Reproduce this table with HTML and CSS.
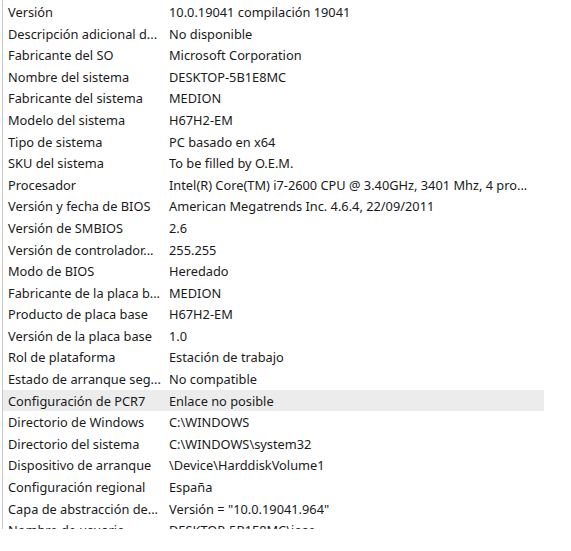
FILE: index.html
```html
<!DOCTYPE html>
<html lang="es">
<head>
<meta charset="utf-8">
<link rel="stylesheet" href="styles.css">
</head>
<body>
<div class="panel">
  <div class="list">
    <div class="row"><span class="k">Versión</span><span class="v">10.0.19041 compilación 19041</span></div>
    <div class="row"><span class="k">Descripción adicional d...</span><span class="v">No disponible</span></div>
    <div class="row"><span class="k">Fabricante del SO</span><span class="v">Microsoft Corporation</span></div>
    <div class="row"><span class="k">Nombre del sistema</span><span class="v">DESKTOP-5B1E8MC</span></div>
    <div class="row"><span class="k">Fabricante del sistema</span><span class="v">MEDION</span></div>
    <div class="row"><span class="k">Modelo del sistema</span><span class="v">H67H2-EM</span></div>
    <div class="row"><span class="k">Tipo de sistema</span><span class="v">PC basado en x64</span></div>
    <div class="row"><span class="k">SKU del sistema</span><span class="v">To be filled by O.E.M.</span></div>
    <div class="row"><span class="k">Procesador</span><span class="v">Intel(R) Core(TM) i7-2600 CPU @ 3.40GHz, 3401 Mhz, 4 pro...</span></div>
    <div class="row"><span class="k">Versión y fecha de BIOS</span><span class="v">American Megatrends Inc. 4.6.4, 22/09/2011</span></div>
    <div class="row"><span class="k">Versión de SMBIOS</span><span class="v">2.6</span></div>
    <div class="row"><span class="k">Versión de controlador...</span><span class="v">255.255</span></div>
    <div class="row"><span class="k">Modo de BIOS</span><span class="v">Heredado</span></div>
    <div class="row"><span class="k">Fabricante de la placa b...</span><span class="v">MEDION</span></div>
    <div class="row"><span class="k">Producto de placa base</span><span class="v">H67H2-EM</span></div>
    <div class="row"><span class="k">Versión de la placa base</span><span class="v">1.0</span></div>
    <div class="row"><span class="k">Rol de plataforma</span><span class="v">Estación de trabajo</span></div>
    <div class="row"><span class="k">Estado de arranque seg...</span><span class="v">No compatible</span></div>
    <div class="row sel"><span class="k">Configuración de PCR7</span><span class="v">Enlace no posible</span></div>
    <div class="row"><span class="k">Directorio de Windows</span><span class="v">C:\WINDOWS</span></div>
    <div class="row"><span class="k">Directorio del sistema</span><span class="v">C:\WINDOWS\system32</span></div>
    <div class="row"><span class="k">Dispositivo de arranque</span><span class="v">\Device\HarddiskVolume1</span></div>
    <div class="row"><span class="k">Configuración regional</span><span class="v">España</span></div>
    <div class="row"><span class="k">Capa de abstracción de...</span><span class="v">Versión = "10.0.19041.964"</span></div>
    <div class="row"><span class="k">Nombre de usuario</span><span class="v">DESKTOP-5B1E8MC\jose</span></div>
  </div>
</div>
</body>
</html>
```

FILE: styles.css
```css
html, body {
  margin: 0;
  padding: 0;
  background: #ffffff;
}
body {
  font-family: "Noto Sans", "Open Sans", sans-serif;
  font-size: 12.8px;
  color: #1a1a1a;
}
.panel {
  margin-left: 2px;
  width: 541px;
  height: 529px;
  border-left: 1px solid #c8c8c8;
  overflow: hidden;
}
.list {
  padding-top: 1.2px;
}
.row {
  display: grid;
  grid-template-columns: 166px 1fr;
  height: 21.6px;
  align-items: center;
  white-space: nowrap;
}
.row.sel {
  background: #ececec;
}
.k {
  padding-left: 5px;
  overflow: hidden;
}
.v {
  overflow: hidden;
}
```
